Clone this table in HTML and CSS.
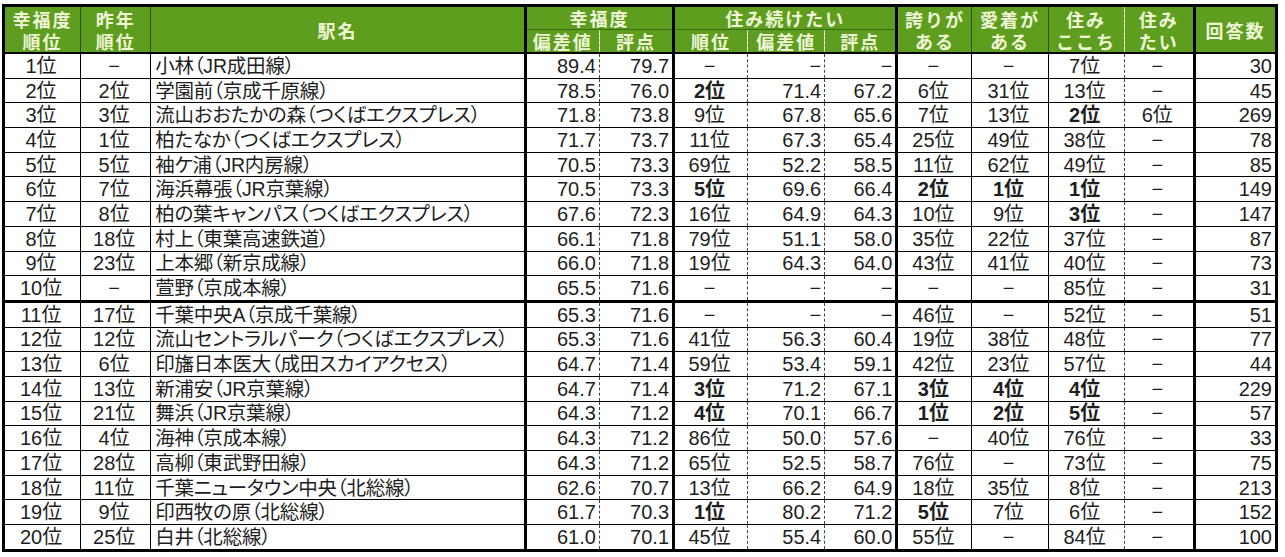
FILE: index.html
```html
<!DOCTYPE html>
<html lang="ja">
<head>
<meta charset="utf-8">
<title>幸福度ランキング</title>
<link rel="stylesheet" href="styles.css">
</head>
<body>
<table class="rank">
<colgroup>
<col class="w-rank"><col class="w-prev"><col class="w-name">
<col class="w-n"><col class="w-n"><col class="w-n"><col class="w-n2"><col class="w-n3">
<col class="w-c"><col class="w-c2"><col class="w-c2"><col class="w-c3"><col class="w-cnt">
</colgroup>
<thead>
<tr class="h1">
<th rowspan="2" class="sr">幸福度<br>順位</th>
<th rowspan="2" class="sr">昨年<br>順位</th>
<th rowspan="2" class="tr">駅名</th>
<th colspan="2" class="tr gb">幸福度</th>
<th colspan="3" class="tr gb">住み続けたい</th>
<th rowspan="2" class="sr">誇りが<br>ある</th>
<th rowspan="2" class="sr">愛着が<br>ある</th>
<th rowspan="2" class="hd">住み<br>ここち</th>
<th rowspan="2" class="tr">住み<br>たい</th>
<th rowspan="2">回答数</th>
</tr>
<tr class="h2">
<th class="hd">偏差値</th><th class="tr">評点</th>
<th class="hd">順位</th><th class="hd">偏差値</th><th class="tr">評点</th>
</tr>
</thead>
<tbody>
<tr><td>1位</td><td>−</td><td>小林（JR成田線）</td><td>89.4</td><td>79.7</td><td>−</td><td>−</td><td>−</td><td>−</td><td>−</td><td>7位</td><td>−</td><td>30</td></tr>
<tr><td>2位</td><td>2位</td><td>学園前（京成千原線）</td><td>78.5</td><td>76.0</td><td class="b">2位</td><td>71.4</td><td>67.2</td><td>6位</td><td>31位</td><td>13位</td><td>−</td><td>45</td></tr>
<tr><td>3位</td><td>3位</td><td>流山おおたかの森（つくばエクスプレス）</td><td>71.8</td><td>73.8</td><td>9位</td><td>67.8</td><td>65.6</td><td>7位</td><td>13位</td><td class="b">2位</td><td>6位</td><td>269</td></tr>
<tr><td>4位</td><td>1位</td><td>柏たなか（つくばエクスプレス）</td><td>71.7</td><td>73.7</td><td>11位</td><td>67.3</td><td>65.4</td><td>25位</td><td>49位</td><td>38位</td><td>−</td><td>78</td></tr>
<tr><td>5位</td><td>5位</td><td>袖ケ浦（JR内房線）</td><td>70.5</td><td>73.3</td><td>69位</td><td>52.2</td><td>58.5</td><td>11位</td><td>62位</td><td>49位</td><td>−</td><td>85</td></tr>
<tr><td>6位</td><td>7位</td><td>海浜幕張（JR京葉線）</td><td>70.5</td><td>73.3</td><td class="b">5位</td><td>69.6</td><td>66.4</td><td class="b">2位</td><td class="b">1位</td><td class="b">1位</td><td>−</td><td>149</td></tr>
<tr><td>7位</td><td>8位</td><td>柏の葉キャンパス（つくばエクスプレス）</td><td>67.6</td><td>72.3</td><td>16位</td><td>64.9</td><td>64.3</td><td>10位</td><td>9位</td><td class="b">3位</td><td>−</td><td>147</td></tr>
<tr><td>8位</td><td>18位</td><td>村上（東葉高速鉄道）</td><td>66.1</td><td>71.8</td><td>79位</td><td>51.1</td><td>58.0</td><td>35位</td><td>22位</td><td>37位</td><td>−</td><td>87</td></tr>
<tr><td>9位</td><td>23位</td><td>上本郷（新京成線）</td><td>66.0</td><td>71.8</td><td>19位</td><td>64.3</td><td>64.0</td><td>43位</td><td>41位</td><td>40位</td><td>−</td><td>73</td></tr>
<tr class="sep"><td>10位</td><td>−</td><td>萱野（京成本線）</td><td>65.5</td><td>71.6</td><td>−</td><td>−</td><td>−</td><td>−</td><td>−</td><td>85位</td><td>−</td><td>31</td></tr>
<tr><td>11位</td><td>17位</td><td>千葉中央A（京成千葉線）</td><td>65.3</td><td>71.6</td><td>−</td><td>−</td><td>−</td><td>46位</td><td>−</td><td>52位</td><td>−</td><td>51</td></tr>
<tr><td>12位</td><td>12位</td><td>流山セントラルパーク（つくばエクスプレス）</td><td>65.3</td><td>71.6</td><td>41位</td><td>56.3</td><td>60.4</td><td>19位</td><td>38位</td><td>48位</td><td>−</td><td>77</td></tr>
<tr><td>13位</td><td>6位</td><td>印旛日本医大（成田スカイアクセス）</td><td>64.7</td><td>71.4</td><td>59位</td><td>53.4</td><td>59.1</td><td>42位</td><td>23位</td><td>57位</td><td>−</td><td>44</td></tr>
<tr><td>14位</td><td>13位</td><td>新浦安（JR京葉線）</td><td>64.7</td><td>71.4</td><td class="b">3位</td><td>71.2</td><td>67.1</td><td class="b">3位</td><td class="b">4位</td><td class="b">4位</td><td>−</td><td>229</td></tr>
<tr><td>15位</td><td>21位</td><td>舞浜（JR京葉線）</td><td>64.3</td><td>71.2</td><td class="b">4位</td><td>70.1</td><td>66.7</td><td class="b">1位</td><td class="b">2位</td><td class="b">5位</td><td>−</td><td>57</td></tr>
<tr><td>16位</td><td>4位</td><td>海神（京成本線）</td><td>64.3</td><td>71.2</td><td>86位</td><td>50.0</td><td>57.6</td><td>−</td><td>40位</td><td>76位</td><td>−</td><td>33</td></tr>
<tr><td>17位</td><td>28位</td><td>高柳（東武野田線）</td><td>64.3</td><td>71.2</td><td>65位</td><td>52.5</td><td>58.7</td><td>76位</td><td>−</td><td>73位</td><td>−</td><td>75</td></tr>
<tr><td>18位</td><td>11位</td><td>千葉ニュータウン中央（北総線）</td><td>62.6</td><td>70.7</td><td>13位</td><td>66.2</td><td>64.9</td><td>18位</td><td>35位</td><td>8位</td><td>−</td><td>213</td></tr>
<tr><td>19位</td><td>9位</td><td>印西牧の原（北総線）</td><td>61.7</td><td>70.3</td><td class="b">1位</td><td>80.2</td><td>71.2</td><td class="b">5位</td><td>7位</td><td>6位</td><td>−</td><td>152</td></tr>
<tr><td>20位</td><td>25位</td><td>白井（北総線）</td><td>61.0</td><td>70.1</td><td>45位</td><td>55.4</td><td>60.0</td><td>55位</td><td>−</td><td>84位</td><td>−</td><td>100</td></tr>
</tbody>
</table>
</body>
</html>
```
FILE: styles.css
```css
html, body {
  margin: 0;
  padding: 0;
  background: #ffffff;
}
body {
  padding: 4px 0 0 2px;
  font-family: "Liberation Sans", "Noto Sans CJK JP", sans-serif;
}
.rank {
  border-collapse: collapse;
  table-layout: fixed;
  width: 1276px;
  border: 3px solid #000;
}
.w-rank { width: 77px; }
.w-prev { width: 70px; }
.w-name { width: 374px; }
.w-n { width: 74px; }
.w-n2 { width: 77px; }
.w-n3 { width: 72px; }
.w-c { width: 75px; }
.w-c2 { width: 76px; }
.w-c3 { width: 70px; }
.w-cnt { width: 82px; }

.rank th {
  background: #5e9e1e;
  color: #f0f6d8;
  font-family: "Noto Sans CJK JP", sans-serif;
  font-weight: bold;
  font-size: 18px;
  line-height: 22px;
  letter-spacing: 2px;
  padding: 0;
  text-align: center;
  border-right: 1px solid #2f4f10;
  border-bottom: 2px solid #000;
  overflow: hidden;
  white-space: nowrap;
}
.rank .h1 th { height: 22px; }
.rank .h2 th { height: 22px; }
.rank th.gb { border-bottom: 1px solid #3a6a12; }
.rank th.tr { border-right: 3px solid #000; }
.rank th.hd { border-right: 1px dashed #c8dca0; }

.rank td {
  font-size: 20px;
  line-height: 22px;
  height: 23.7px;
  padding: 0 3px 0 0;
  color: #1e1e1e;
  border-bottom: 1px solid #000;
  border-right: 1px dashed #444;
  white-space: nowrap;
  overflow: hidden;
  text-align: center;
  font-feature-settings: "palt";
}
.rank td.b { font-weight: bold; }
.rank td:nth-child(1),
.rank td:nth-child(2),
.rank td:nth-child(9),
.rank td:nth-child(10) { border-right: 1px solid #000; }
.rank td:nth-child(3) {
  text-align: left;
  padding-left: 4px;
  font-size: 19.5px;
  letter-spacing: -0.2px;
  border-right: 3px solid #000;
}
.rank td:nth-child(4),
.rank td:nth-child(5),
.rank td:nth-child(7),
.rank td:nth-child(8),
.rank td:nth-child(13) { text-align: right; }
.rank td:nth-child(5),
.rank td:nth-child(8),
.rank td:nth-child(12) { border-right: 3px solid #000; }
.rank tr.sep td { border-bottom: 3px solid #000; }
```
